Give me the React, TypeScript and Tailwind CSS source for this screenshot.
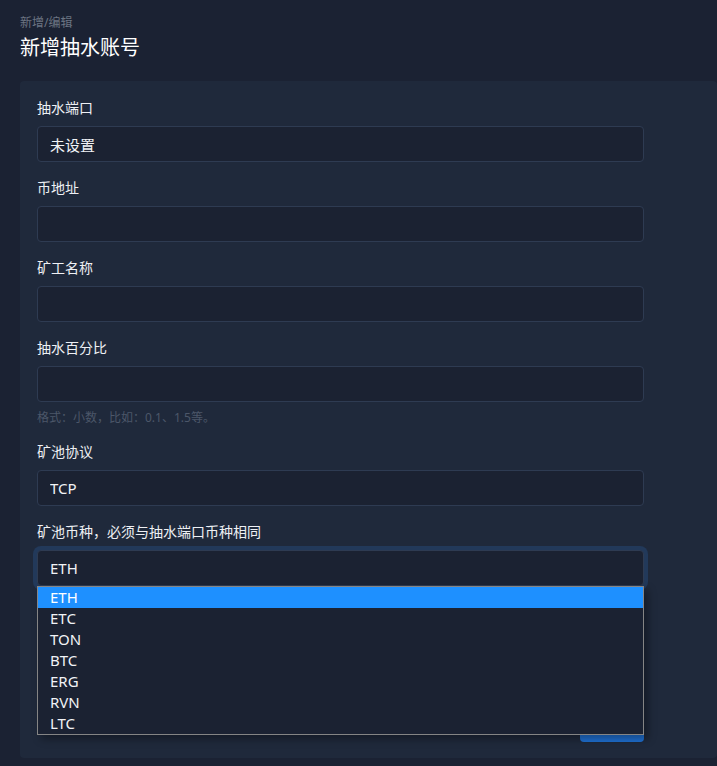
import { useState } from 'react'

const coins = ['ETH', 'ETC', 'TON', 'BTC', 'ERG', 'RVN', 'LTC']

const font = { fontFamily: '"Noto Sans", "Noto Sans CJK SC", sans-serif' }

type FieldProps = {
  label: string
  value?: string
  help?: string
}

const Field = ({ label, value = '', help }: FieldProps) => (
  <div className="mb-4">
    <label className="mb-2 block text-sm leading-5 text-[#eef0f4]">{label}</label>
    <input
      readOnly
      value={value}
      className="block h-9 w-[607px] rounded border border-[#2e3b52] bg-[#1b2232] px-3 text-[15px] text-[#f1f3f6] outline-none"
    />
    {help && <p className="mt-2 text-xs leading-4 text-[#4c5769]">{help}</p>}
  </div>
)

export default function App() {
  const [coin, setCoin] = useState('ETH')

  return (
    <div className="min-h-[766px] bg-[#1b2233] pb-2" style={font}>
      <div className="px-5 pt-[15px]">
        <div className="text-xs leading-4 text-[#6c7482]">新增/编辑</div>
        <h1 className="mt-[3px] text-xl leading-7 text-white">新增抽水账号</h1>
      </div>

      <div className="ml-5 mt-[19px] rounded bg-[#1f293b] px-[17px] pb-4 pt-[17px]">
        <Field label="抽水端口" value="未设置" />
        <Field label="币地址" />
        <Field label="矿工名称" />
        <Field label="抽水百分比" help="格式：小数，比如：0.1、1.5等。" />
        <Field label="矿池协议" value="TCP" />

        <div className="relative mb-4">
          <label className="mb-2 block text-sm leading-5 text-[#eef0f4]">矿池币种，必须与抽水端口币种相同</label>
          <div className="flex h-9 w-[607px] items-center rounded border border-[#2e3b52] bg-[#1b2232] px-3 text-[15px] text-[#f1f3f6] shadow-[0_0_0_4px_#22395a]">
            {coin}
          </div>

          {/* open option list of the coin select */}
          <ul className="absolute left-0 top-[64px] z-10 w-[607px] border border-[#858585] bg-[#1b2232] shadow-[4px_4px_8px_rgba(0,0,0,0.35)]">
            {coins.map((c) => (
              <li
                key={c}
                onClick={() => setCoin(c)}
                className={
                  c === coin
                    ? 'h-[21px] bg-[#1e90ff] pl-3 text-[15px] leading-[21px] text-white'
                    : 'h-[21px] pl-3 text-[15px] leading-[21px] text-[#f1f3f6]'
                }
              >
                {c}
              </li>
            ))}
          </ul>
        </div>

        {/* next field sits under the open list */}
        <div className="mb-6 h-[80px]" />

        <div className="flex w-[607px] justify-end">
          <button className="h-9 w-16 rounded bg-[#1f6fd0] text-sm text-white">保存</button>
        </div>
      </div>
    </div>
  )
}
